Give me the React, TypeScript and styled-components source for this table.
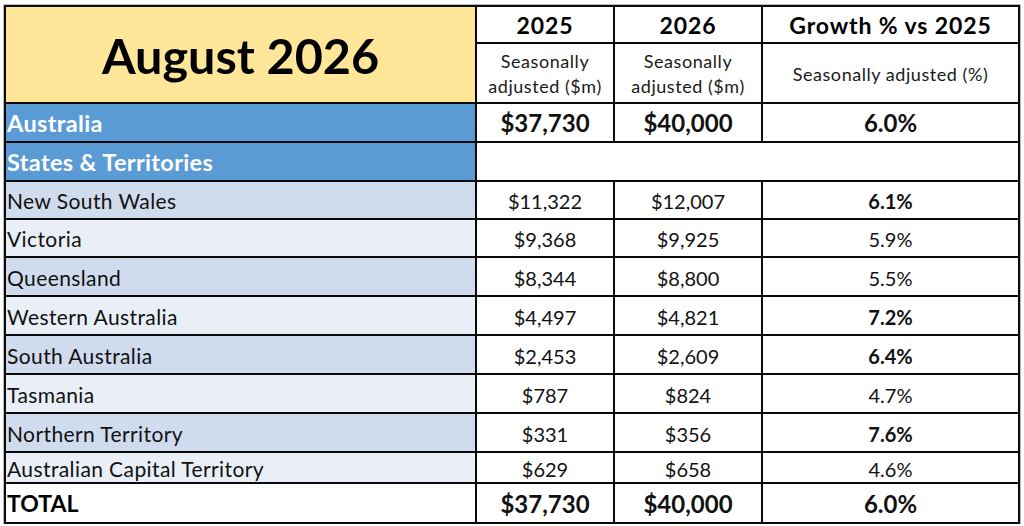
import React from "react";
import styled, { createGlobalStyle } from "styled-components";

const Global = createGlobalStyle`
  html, body { margin: 0; padding: 0; background: #ffffff; }
  body { font-family: Lato, "Open Sans", sans-serif; color: #111; }
`;

const Page = styled.div`
  padding: 5px 0 0 4px;
`;

const Grid = styled.div`
  display: grid;
  grid-template-columns: 469px 136px 146px 255px;
  grid-template-rows: 35px 58px 37px 37px 36px 36px 37px 37px 37px 37px 37px 29px 38px;
  gap: 2px;
  padding: 2px;
  width: max-content;
  background: #0a0a0a;
  box-shadow: 0 0 0 0.5px #777;
`;

type CellProps = {
  $bg?: string;
  $align?: "left" | "center";
  $bold?: boolean;
  $size?: number;
  $spacing?: number;
  $color?: string;
  $colSpan?: number;
  $rowSpan?: number;
};

const Cell = styled.div<CellProps>`
  display: flex;
  align-items: center;
  justify-content: ${(p) => (p.$align === "left" ? "flex-start" : "center")};
  text-align: ${(p) => p.$align ?? "center"};
  padding: 2px 0 0 ${(p) => (p.$align === "left" ? "1px" : "0")};
  background: ${(p) => p.$bg ?? "#ffffff"};
  color: ${(p) => p.$color ?? "#111"};
  font-weight: ${(p) => (p.$bold ? 700 : 400)};
  font-size: ${(p) => p.$size ?? 20}px;
  letter-spacing: ${(p) => p.$spacing ?? 0}px;
  line-height: 1.2;
  white-space: nowrap;
  grid-column: ${(p) => (p.$colSpan ? `span ${p.$colSpan}` : "auto")};
  grid-row: ${(p) => (p.$rowSpan ? `span ${p.$rowSpan}` : "auto")};
`;

const Title = styled(Cell)`
  font-size: 48.5px;
  font-weight: 700;
  color: #000;
  letter-spacing: 0;
`;

const ColHead = styled(Cell)`
  font-size: 23px;
  font-weight: 700;
  letter-spacing: 0.9px;
  color: #000;
`;

const SubHead = styled(Cell)`
  font-size: 18px;
  letter-spacing: 0.55px;
  line-height: 25px;
  color: #1a1a1a;
`;

const BandLabel = styled(Cell)`
  font-size: 23.5px;
  font-weight: 700;
  letter-spacing: 0.35px;
  color: #ffffff;
  background: #5b9bd5;
`;

const RegionLabel = styled(Cell)`
  font-size: 21px;
  letter-spacing: 0.4px;
`;

const YELLOW = "#ffe699";
const STRIPE_DARK = "#d0dbed";
const STRIPE_LIGHT = "#e9eef7";

type Row = { name: string; a: string; b: string; g: string; strong: boolean };

const rows: Row[] = [
  { name: "New South Wales", a: "$11,322", b: "$12,007", g: "6.1%", strong: true },
  { name: "Victoria", a: "$9,368", b: "$9,925", g: "5.9%", strong: false },
  { name: "Queensland", a: "$8,344", b: "$8,800", g: "5.5%", strong: false },
  { name: "Western Australia", a: "$4,497", b: "$4,821", g: "7.2%", strong: true },
  { name: "South Australia", a: "$2,453", b: "$2,609", g: "6.4%", strong: true },
  { name: "Tasmania", a: "$787", b: "$824", g: "4.7%", strong: false },
  { name: "Northern Territory", a: "$331", b: "$356", g: "7.6%", strong: true },
  { name: "Australian Capital Territory", a: "$629", b: "$658", g: "4.6%", strong: false },
];

export default function App() {
  return (
    <Page>
      <Global />
      <Grid>
        <Title $bg={YELLOW} $rowSpan={2}>August 2026</Title>
        <ColHead>2025</ColHead>
        <ColHead>2026</ColHead>
        <ColHead>Growth % vs 2025</ColHead>
        <SubHead>Seasonally<br />adjusted ($m)</SubHead>
        <SubHead>Seasonally<br />adjusted ($m)</SubHead>
        <SubHead>Seasonally adjusted (%)</SubHead>

        <BandLabel $align="left">Australia</BandLabel>
        <Cell $bold $size={24}>$37,730</Cell>
        <Cell $bold $size={24}>$40,000</Cell>
        <Cell $bold $size={24}>6.0%</Cell>

        <BandLabel $align="left">States &amp; Territories</BandLabel>
        <Cell $colSpan={3} />

        {rows.map((r, i) => (
          <React.Fragment key={r.name}>
            <RegionLabel $bg={i % 2 === 0 ? STRIPE_DARK : STRIPE_LIGHT} $align="left">
              {r.name}
            </RegionLabel>
            <Cell>{r.a}</Cell>
            <Cell>{r.b}</Cell>
            <Cell $bold={r.strong}>{r.g}</Cell>
          </React.Fragment>
        ))}

        <Cell $align="left" $bold $size={23} $color="#000">TOTAL</Cell>
        <Cell $bold $size={24}>$37,730</Cell>
        <Cell $bold $size={24}>$40,000</Cell>
        <Cell $bold $size={24}>6.0%</Cell>
      </Grid>
    </Page>
  );
}
